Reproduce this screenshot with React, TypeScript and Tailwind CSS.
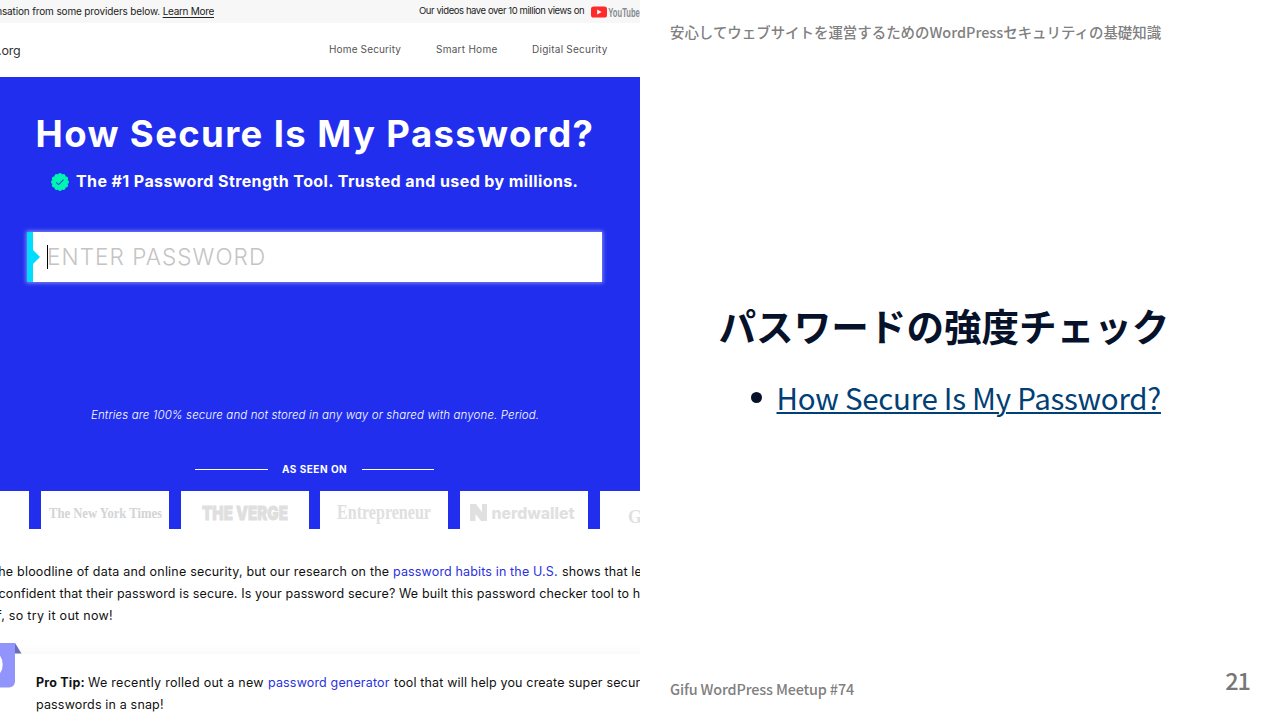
function YouTubeLogo() {
  return (
    <svg className="h-[23px] w-[50px] shrink-0" viewBox="0 0 50 23">
      <rect x="0" y="6.500" width="16" height="11" rx="2.6" fill="#ff2a2a" />
      <path d="M6.2 9.600v4.8l4.4-2.4z" fill="#fff" />
      <text
        x="17.300"
        y="16.600"
        textLength="31.500"
        lengthAdjust="spacingAndGlyphs"
        className="fill-[#858b8f] font-['Liberation_Sans_Narrow','Liberation_Sans',sans-serif] text-[13px] font-bold"
      >
        YouTube
      </text>
    </svg>
  );
}

function VerifiedBadge() {
  const lobes = Array.from({ length: 12 }, (_, i) => (i * Math.PI) / 6);
  return (
    <svg className="h-[18px] w-[18px] shrink-0" viewBox="0 0 18 18">
      <circle cx="9" cy="9" r="7.8" fill="#00f5b0" />
      {lobes.map((a) => (
        <circle key={a} cx={9 + 7 * Math.cos(a)} cy={9 + 7 * Math.sin(a)} r="2" fill="#00f5b0" />
      ))}
      <path d="M5.2 9.3l2.4 2.3 5-4.9" fill="none" stroke="#1f4fd8" strokeWidth="1.1" />
    </svg>
  );
}

function TopBar() {
  return (
    <div className="flex h-[23px] shrink-0 items-start justify-between overflow-hidden bg-[#f7f7f7] whitespace-nowrap text-[#222]">
      <div className="flex w-[214px] justify-end text-[10px] leading-[22px] tracking-[-0.14px]">
        <span>You may receive compensation from some providers below.&nbsp;</span>
        <a className="tracking-[-0.3px] underline underline-offset-[1.5px]">Learn More</a>
      </div>
      <div className="flex w-[221px] items-start">
        <span className="w-[172px] shrink-0 text-[9.5px] leading-[22px] tracking-[-0.42px]">
          Our videos have over 10 million views on
        </span>
        <YouTubeLogo />
      </div>
    </div>
  );
}

function Nav() {
  return (
    <nav className="flex h-[54px] shrink-0 items-center justify-between pb-px whitespace-nowrap">
      <div className="flex w-[20.5px] justify-end pt-[3px] text-[12.5px] tracking-[-0.2px] text-[#333]">Security.org</div>
      <div className="flex w-[311px] text-[10px] text-[#555]">
        <span className="w-[107px] tracking-[0.15px]">Home Security</span>
        <span className="w-[96px] tracking-[0.27px]">Smart Home</span>
        <span className="tracking-[0.25px]">Digital Security</span>
      </div>
    </nav>
  );
}

const logoCard = "flex h-[38px] w-[128px] shrink-0 bg-white";

function PressLogos() {
  return (
    <div className="flex h-[38px] w-[740px] shrink-0 gap-[11.8px]">
      <div className="h-[38px] w-[29px] shrink-0 bg-white" />
      <div className={logoCard}>
        <svg viewBox="0 0 128 38" className="h-[38px] w-[128px]">
          <text x="8" y="27" textLength="113" lengthAdjust="spacingAndGlyphs" className="fill-[#d3d4d5] font-['Liberation_Serif',serif] text-[15.5px] font-bold">
            The New York Times
          </text>
        </svg>
      </div>
      <div className={logoCard}>
        <svg viewBox="0 0 128 38" className="h-[38px] w-[128px]">
          <text x="21" y="29" textLength="86" lengthAdjust="spacingAndGlyphs" className="fill-[#dfdfdf] stroke-[#dfdfdf] font-['Inter',sans-serif] text-[19px] font-black" strokeWidth="0.8">
            THE VERGE
          </text>
        </svg>
      </div>
      <div className={logoCard}>
        <svg viewBox="0 0 128 38" className="h-[38px] w-[128px]">
          <text x="17" y="28" textLength="94" lengthAdjust="spacingAndGlyphs" className="fill-[#dfe0e0] font-['Liberation_Serif',serif] text-[21px] font-bold">
            Entrepreneur
          </text>
        </svg>
      </div>
      <div className={logoCard}>
        <svg viewBox="0 0 128 38" className="h-[38px] w-[128px]">
          <path d="M10 13h6l6 8v-8h5v17h-6l-5.500-7v7h-5.500z" fill="#dfe1e1" />
          <text x="31.500" y="27.500" textLength="83" lengthAdjust="spacingAndGlyphs" className="fill-[#dfe1e1] font-['Inter',sans-serif] text-[16px] font-extrabold">
            nerdwallet
          </text>
        </svg>
      </div>
      <div className={logoCard}>
        <svg viewBox="0 0 128 38" className="h-[38px] w-[128px]">
          <text x="28" y="31.500" className="fill-[#dfe0e0] font-['Liberation_Serif',serif] text-[18px] font-bold">
            Gizmodo
          </text>
        </svg>
      </div>
    </div>
  );
}

function Hero() {
  return (
    <section className="flex h-[452px] shrink-0 flex-col overflow-hidden bg-[#212eee] whitespace-nowrap text-white">
      <h1 className="mt-[35px] ml-[35.5px] h-[44px] shrink-0 text-[36.5px] leading-[44px] font-bold tracking-[1.38px]">
        How Secure Is My Password?
      </h1>
      <div className="mt-[16px] ml-[51px] flex h-[19px] shrink-0 items-center">
        <VerifiedBadge />
        <span className="ml-[7px] text-[16px] leading-[19px] font-bold tracking-[0.4px]">
          The #1 Password Strength Tool. Trusted and used by millions.
        </span>
      </div>
      <div className="mt-[41px] ml-[27px] flex h-[50px] w-[575px] shrink-0 items-center bg-white shadow-[0_0_4px_1px_rgba(255,255,255,0.45)]">
        <div className="h-[50px] w-[6px] bg-[#00dcff]" />
        <svg className="h-[14px] w-[7px]" viewBox="0 0 7 14">
          <path d="M0 0l7 7-7 7z" fill="#00dcff" />
        </svg>
        <div className="ml-[7px] h-[24px] w-px bg-black" />
        <span className="-ml-px text-[22.5px] font-light tracking-[1.08px] text-[#c4c4c4]">ENTER PASSWORD</span>
      </div>
      <p className="mt-[123px] ml-[91px] h-[20px] shrink-0 text-[11.5px] leading-[20px] font-light tracking-[0.12px] italic">
        Entries are 100% secure and not stored in any way or shared with anyone. Period.
      </p>
      <div className="mt-[36px] mb-[14px] ml-[195px] flex h-[16px] shrink-0 items-center">
        <div className="h-px w-[73px] bg-white" />
        <span className="w-[94px] pl-[14px] text-[10px] leading-[16px] font-bold tracking-[0.5px]">AS SEEN ON</span>
        <div className="h-px w-[72px] bg-white" />
      </div>
      <PressLogos />
    </section>
  );
}

function Article() {
  return (
    <section className="h-[114px] shrink-0 pt-[31.5px] text-[12.5px] leading-[22.2px] tracking-[0.15px] whitespace-nowrap text-[#111]">
      <div className="flex">
        <span className="flex w-[393px] shrink-0 justify-end tracking-[0.2px]">
          the bloodline of data and online security, but our research on the&nbsp;
        </span>
        <a className="w-[169px] shrink-0 text-[#2a31e0]">password habits in the U.S.</a>
        <span>shows that less</span>
      </div>
      <p className="-ml-[1.500px] tracking-[0.13px]">
        confident that their password is secure. Is your password secure? We built this password checker tool to help
      </p>
      <div className="flex w-[113px] justify-end tracking-[0.3px]">yourself, so try it out now!</div>
    </section>
  );
}

function ProTip() {
  return (
    <section className="flex h-[77px] shrink-0 items-start">
      <svg className="relative z-10 h-[46px] w-[22px] shrink-0" viewBox="0 0 22 46">
        <path d="M0 0h15v38.500a6 6 0 0 1-6 6H0z" fill="#9195fb" />
        <path d="M15 0l6.500 10.500H15z" fill="#686dbd" />
        <ellipse cx="-4" cy="21.500" rx="6.700" ry="10.500" fill="#fff" />
      </svg>
      <div className="mt-[11px] -ml-[22px] h-[90px] w-[700px] shrink-0 bg-white pt-[17.5px] pl-[36px] text-[12.5px] leading-[22.4px] tracking-[0.16px] whitespace-nowrap text-[#111] shadow-[0_0_10px_rgba(0,0,0,0.06)]">
        <div className="flex">
          <b className="w-[52px] shrink-0 tracking-[0.2px]">Pro Tip:</b>
          <span className="w-[180px] shrink-0 tracking-[0.28px]">We recently rolled out a new</span>
          <a className="w-[126px] shrink-0 text-[#2a31e0]">password generator</a>
          <span>tool that will help you create super secure</span>
        </div>
        <p>passwords in a snap!</p>
      </div>
    </section>
  );
}

function Slide() {
  return (
    <main className="flex h-[720px] w-[640px] flex-col bg-white font-['Noto_Sans_CJK_JP',sans-serif] whitespace-nowrap">
      <header className="mt-[20px] ml-[30px] h-[24px] text-[14.45px] leading-[24px] font-medium text-[#808080]">
        安心してウェブサイトを運営するためのWordPressセキュリティの基礎知識
      </header>
      <h2 className="mt-[253px] ml-[78.5px] h-[56px] text-[37.6px] leading-[56px] font-bold text-[#06112a]">
        パスワードの強度チェック
      </h2>
      <div className="mt-[22px] ml-[111px] flex h-[44px] items-center text-[29.5px] leading-[44px] tracking-[-0.28px] text-[#023f75]">
        <span className="mt-px mr-[14.5px] h-[11px] w-[11px] rounded-full bg-[#06112a]" />
        <a className="underline decoration-2 underline-offset-[2px]">How Secure Is My Password?</a>
      </div>
      <footer className="mt-auto mb-[19px] flex items-end justify-between pr-[30px] pl-[30px] font-medium text-[#808080]">
        <span className="text-[14.4px] leading-[24px] tracking-[-0.15px]">Gifu WordPress Meetup #74</span>
        <span className="mb-[3px] text-[23.5px] leading-[36px] tracking-[-1px] text-[#777]">21</span>
      </footer>
    </main>
  );
}

export default function App() {
  return (
    <div className="flex h-[720px] w-[1280px] overflow-hidden bg-white">
      <div className="flex h-[720px] w-[640px] shrink-0 flex-col overflow-hidden bg-white font-['Inter',sans-serif]">
        <TopBar />
        <Nav />
        <Hero />
        <Article />
        <ProTip />
      </div>
      <Slide />
    </div>
  );
}
